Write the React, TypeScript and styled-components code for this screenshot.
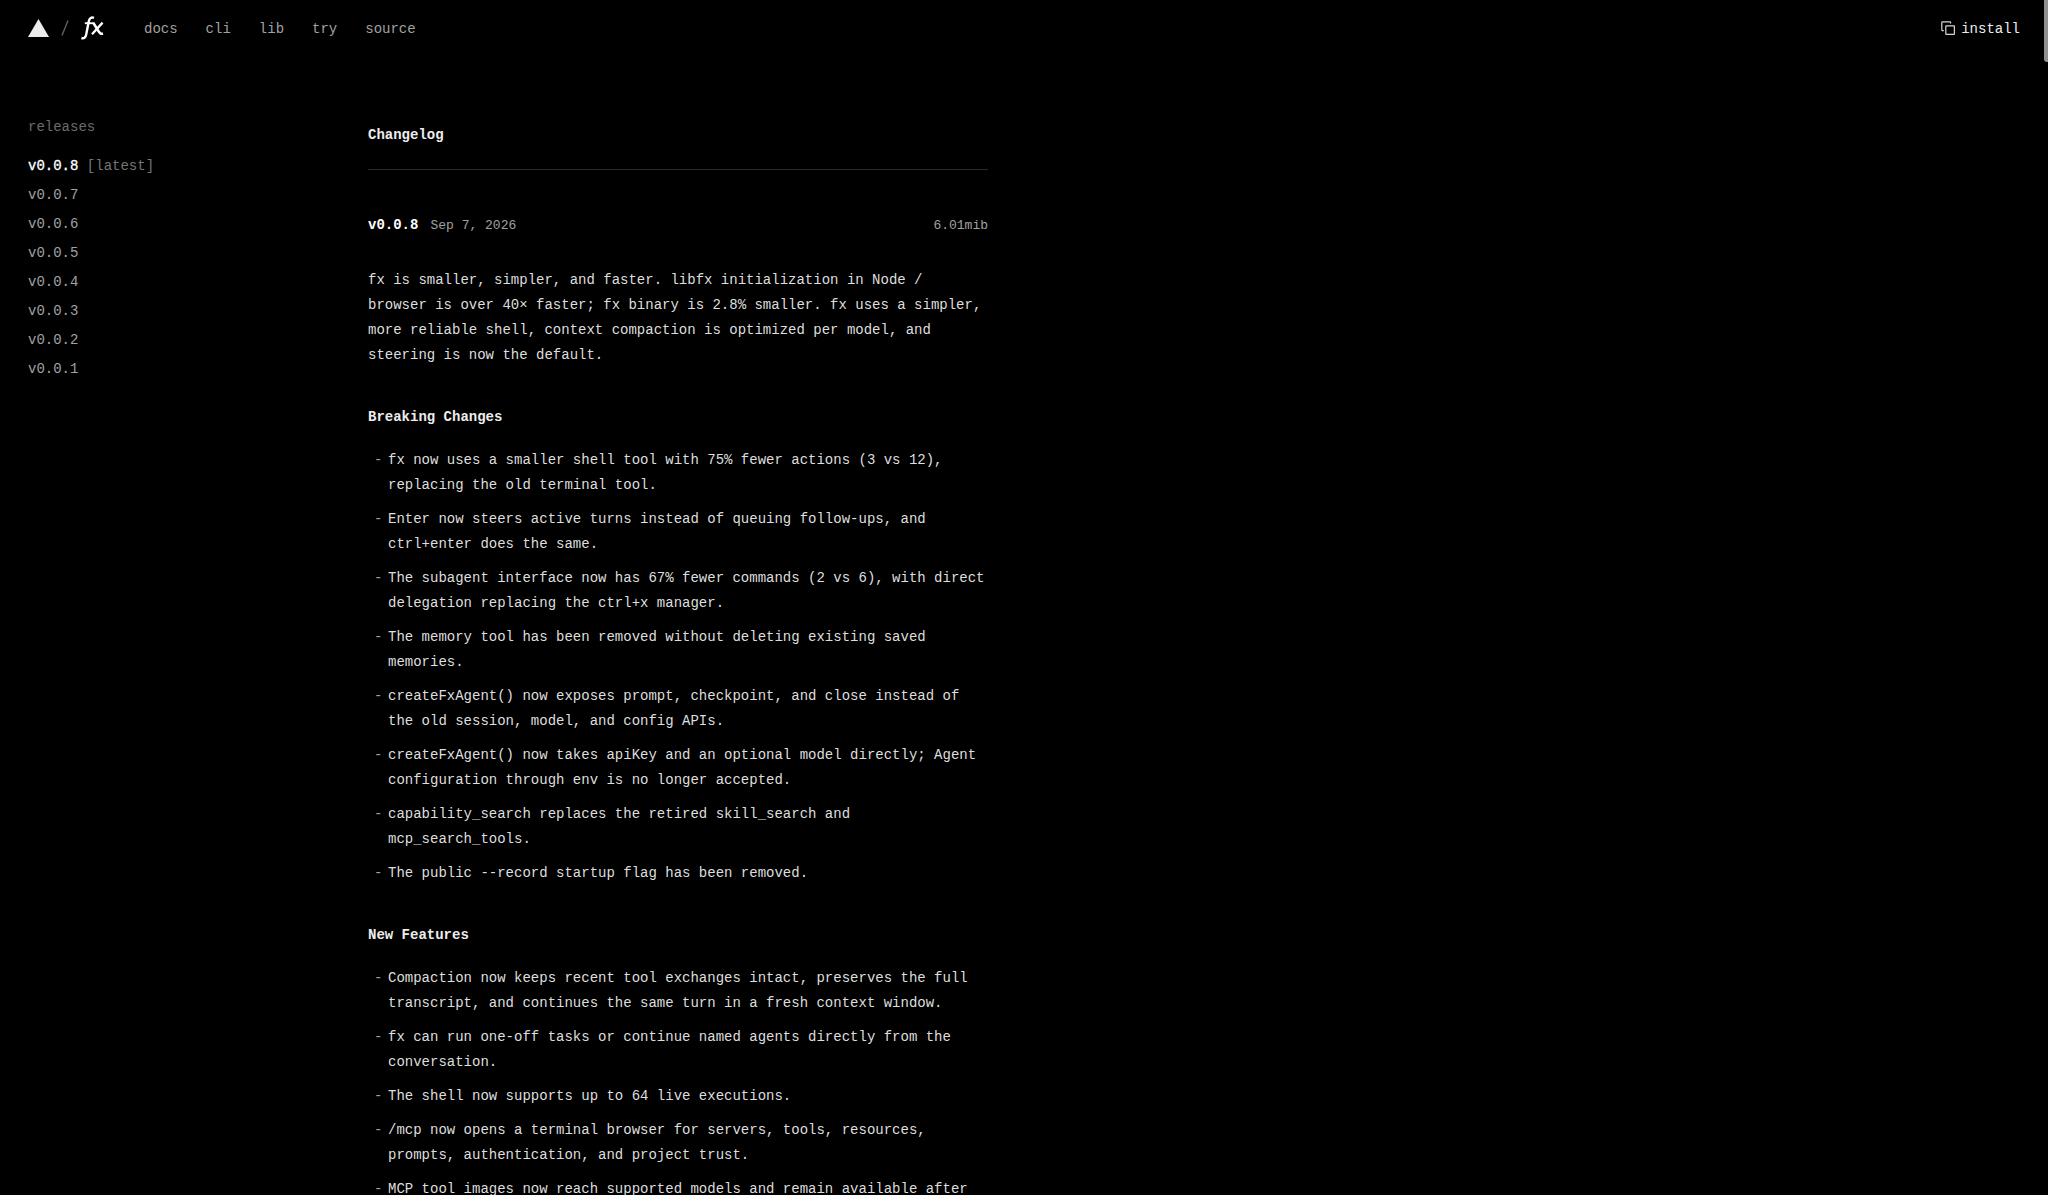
import React from "react";
import styled, { createGlobalStyle } from "styled-components";

const GlobalStyle = createGlobalStyle`
  *, *::before, *::after { box-sizing: border-box; }
  html { background: #000; scrollbar-width: none; }
  body {
    margin: 0;
    background: #000;
    color: #ededed;
    font: 14px/25px "Liberation Mono", "Courier New", monospace;
  }
  a { color: inherit; text-decoration: none; }
`;

const Page = styled.div`
  height: 100vh;
  display: flex;
  flex-direction: column;
  overflow: hidden;
`;

const Header = styled.header`
  flex: none;
  height: 56px;
  padding: 0 28px;
  display: flex;
  align-items: center;
  justify-content: space-between;
`;

const HeaderGroup = styled.div`
  display: flex;
  align-items: center;
  gap: 40px;
`;

const Brand = styled.div`
  display: flex;
  align-items: center;
  gap: 12px;
`;

const BrandLink = styled.a`
  display: flex;
`;

const Nav = styled.nav`
  display: flex;
  gap: 28px;
  padding-top: 2px;
  color: #a1a1a1;
`;

const InstallButton = styled.button`
  display: flex;
  align-items: center;
  gap: 6px;
  padding: 0;
  border: 0;
  background: none;
  color: #ededed;
  font: inherit;
  cursor: pointer;
`;

const InstallLabel = styled.span`
  padding-top: 2px;
`;

const Columns = styled.div`
  flex: 1;
  min-height: 0;
  padding: 0 28px;
  display: grid;
  grid-template-columns: 340px minmax(0, 620px);
`;

const Sidebar = styled.aside`
  padding-top: 59px;
`;

const SidebarTitle = styled.p`
  margin: 0 0 12px;
  color: #6b6b6b;
`;

const ReleaseList = styled.ul`
  margin: 0;
  padding: 0;
  list-style: none;
`;

const ReleaseItem = styled.li<{ $active?: boolean }>`
  line-height: 29px;
  color: ${(p) => (p.$active ? "#fff" : "#a1a1a1")};
  -webkit-text-stroke: ${(p) => (p.$active ? "0.3px" : "0")};
`;

const LatestTag = styled.span`
  color: #757575;
  -webkit-text-stroke: 0;
`;

const Main = styled.main`
  padding-top: 67px;
`;

const Title = styled.h1`
  margin: 0;
  padding-bottom: 21px;
  border-bottom: 1px solid #292929;
  font-size: 14px;
  line-height: 25px;
`;

const ReleaseHeader = styled.header`
  margin-top: 43px;
  display: flex;
  align-items: baseline;
  gap: 12px;
`;

const ReleaseName = styled.h2`
  margin: 0;
  font-size: 14px;
  color: #fff;
`;

const Meta = styled.span<{ $end?: boolean }>`
  margin-left: ${(p) => (p.$end ? "auto" : "0")};
  font-size: 13px;
  color: #a1a1a1;
`;

const Summary = styled.p`
  margin: 30px 0 0;
  color: #dedede;
`;

const SectionTitle = styled.h3`
  margin: 37px 0 18px;
  font-size: 14px;
`;

const ChangeList = styled.ul`
  margin: 0;
  padding: 0;
  list-style: none;
  display: flex;
  flex-direction: column;
  gap: 9px;
  color: #dedede;
`;

const Change = styled.li`
  display: grid;
  grid-template-columns: 8px minmax(0, 1fr);
  column-gap: 6px;
  padding-left: 6px;

  &::before {
    content: "-";
    color: #a1a1a1;
  }
`;

const ScrollThumb = styled.div`
  position: fixed;
  top: 0;
  right: 0;
  width: 4px;
  height: 62px;
  border-radius: 0 0 0 3px;
  background: #909090;
`;

const links = ["docs", "cli", "lib", "try", "source"];
const releases = ["v0.0.8", "v0.0.7", "v0.0.6", "v0.0.5", "v0.0.4", "v0.0.3", "v0.0.2", "v0.0.1"];

const sections = [
  {
    title: "Breaking Changes",
    items: [
      "fx now uses a smaller shell tool with 75% fewer actions (3 vs 12), replacing the old terminal tool.",
      "Enter now steers active turns instead of queuing follow-ups, and ctrl+enter does the same.",
      "The subagent interface now has 67% fewer commands (2 vs 6), with direct delegation replacing the ctrl+x manager.",
      "The memory tool has been removed without deleting existing saved memories.",
      "createFxAgent() now exposes prompt, checkpoint, and close instead of the old session, model, and config APIs.",
      "createFxAgent() now takes apiKey and an optional model directly; Agent configuration through env is no longer accepted.",
      "capability_search replaces the retired skill_search and mcp_search_tools.",
      "The public --record startup flag has been removed.",
    ],
  },
  {
    title: "New Features",
    items: [
      "Compaction now keeps recent tool exchanges intact, preserves the full transcript, and continues the same turn in a fresh context window.",
      "fx can run one-off tasks or continue named agents directly from the conversation.",
      "The shell now supports up to 64 live executions.",
      "/mcp now opens a terminal browser for servers, tools, resources, prompts, authentication, and project trust.",
      "MCP tool images now reach supported models and remain available after",
    ],
  },
];

function Triangle() {
  return (
    <svg width="21" height="18" viewBox="0 0 21 18" aria-hidden="true">
      <path d="M10.5 0 21 18H0Z" fill="#ededed" />
    </svg>
  );
}

function Slash() {
  return (
    <svg width="8" height="16" viewBox="0 0 8 16" aria-hidden="true">
      <path d="M7 .5 1 15.5" stroke="#666" strokeWidth="1.3" fill="none" />
    </svg>
  );
}

function FxLogo() {
  return (
    <svg width="23" height="24" viewBox="0 0 23 24" fill="none" stroke="#fff" aria-hidden="true">
      <path d="M13 1.8C10 .9 8.4 2.4 7.8 5.2L5.2 18.4C4.6 21.6 3 22.8.4 22" strokeWidth="2.4" />
      <path d="M3.8 7.2H12.6" strokeWidth="1.9" />
      <path d="M12.2 6.6 15.6 12.2Q18 16.6 19.6 17.5 20.6 18 22 17.6" strokeWidth="2.6" />
      <path d="M21.6 6.6 11 18.2" strokeWidth="2.3" />
    </svg>
  );
}

function CopyIcon() {
  return (
    <svg width="14" height="14" viewBox="0 0 14 14" fill="none" stroke="#d6d6d6" strokeWidth="1.2" aria-hidden="true">
      <rect x="4.8" y="4.8" width="8.6" height="8.6" rx=".4" />
      <path d="M2.8 9.6H1.4Q.8 9.6.8 9V1.4Q.8.8 1.4.8H9Q9.6.8 9.6 1.4V2.6" />
    </svg>
  );
}

export default function App() {
  return (
    <Page>
      <GlobalStyle />
      <Header>
        <HeaderGroup>
          <Brand>
            <BrandLink href="#" aria-label="Home"><Triangle /></BrandLink>
            <Slash />
            <BrandLink href="#" aria-label="fx"><FxLogo /></BrandLink>
          </Brand>
          <Nav>
            {links.map((label) => <a key={label} href={`#${label}`}>{label}</a>)}
          </Nav>
        </HeaderGroup>
        <InstallButton type="button"><CopyIcon /><InstallLabel>install</InstallLabel></InstallButton>
      </Header>
      <Columns>
        <Sidebar>
          <SidebarTitle>releases</SidebarTitle>
          <ReleaseList>
            {releases.map((name, i) => (
              <ReleaseItem key={name} $active={i === 0}>
                <a href={`#${name}`}>{name}{i === 0 && <LatestTag> [latest]</LatestTag>}</a>
              </ReleaseItem>
            ))}
          </ReleaseList>
        </Sidebar>
        <Main>
          <Title>Changelog</Title>
          <article>
            <ReleaseHeader>
              <ReleaseName>v0.0.8</ReleaseName>
              <Meta>Sep 7, 2026</Meta>
              <Meta $end>6.01mib</Meta>
            </ReleaseHeader>
            <Summary>
              fx is smaller, simpler, and faster. libfx initialization in Node / browser is over 40× faster; fx binary
              is 2.8% smaller. fx uses a simpler, more reliable shell, context compaction is optimized per model, and
              steering is now the default.
            </Summary>
            {sections.map((section) => (
              <section key={section.title}>
                <SectionTitle>{section.title}</SectionTitle>
                <ChangeList>
                  {section.items.map((item) => <Change key={item}>{item}</Change>)}
                </ChangeList>
              </section>
            ))}
          </article>
        </Main>
      </Columns>
      <ScrollThumb />
    </Page>
  );
}
